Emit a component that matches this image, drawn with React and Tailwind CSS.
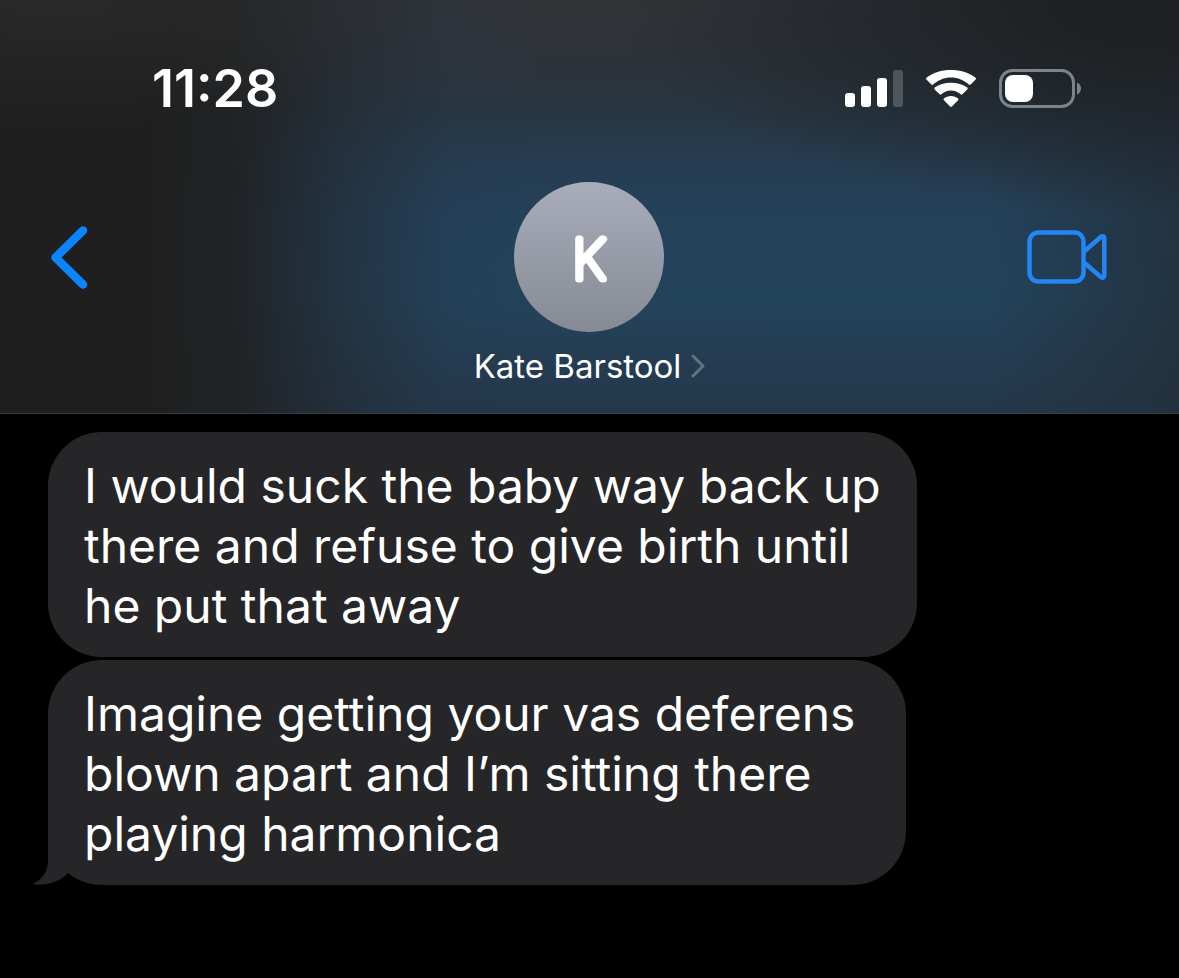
const messages = [
    {
        id: 1,
        lines: [
            "I would suck the baby way back up",
            "there and refuse to give birth until",
            "he put that away",
        ],
    },
    {
        id: 2,
        lines: [
            "Imagine getting your vas deferens",
            "blown apart and I’m sitting there",
            "playing harmonica",
        ],
    },
];

const SignalIcon = () => (
    <svg width="58" height="38" viewBox="0 0 58 38" fill="white" aria-hidden="true">
        <rect x="0" y="23" width="10" height="14" rx="3" />
        <rect x="16" y="16" width="10" height="21" rx="3" />
        <rect x="32" y="8" width="10" height="29" rx="3" />
        <rect x="48" y="0" width="10" height="37" rx="3" opacity="0.2" />
    </svg>
);

const WifiIcon = () => (
    <svg width="52" height="38" viewBox="0 0 52 38" fill="white" aria-hidden="true">
        <path d="M26 7.500c6.900 0 13.200 2.700 17.900 7.100.5.5 1.200.5 1.700 0l5-5c.5-.5.5-1.300 0-1.800C44.200 2.600 35.500 0 26 0S7.800 2.600 1.400 7.800c-.5.5-.5 1.300 0 1.800l5 5c.5.5 1.200.5 1.700 0C12.800 10.200 19.100 7.500 26 7.500z" />
        <path d="M26 20.600c3.700 0 7.100 1.400 9.700 3.700.5.5 1.200.5 1.700 0l4.900-4.900c.5-.5.5-1.300 0-1.800C38 14.600 32.300 12.700 26 12.700s-12 1.900-16.300 4.900c-.5.5-.5 1.300 0 1.800l4.900 4.900c.5.5 1.200.5 1.700 0 2.600-2.300 6-3.700 9.700-3.700z" />
        <path d="M33.100 28.600c.5.5.5 1.200 0 1.700l-6.200 6.300c-.5.5-1.300.5-1.800 0l-6.200-6.300c-.5-.5-.5-1.200 0-1.700 1.900-1.600 4.300-2.600 7.100-2.600s5.200 1 7.100 2.600z" />
    </svg>
);

const BatteryIcon = () => (
    <svg width="83" height="40" viewBox="0 0 83 40" aria-hidden="true">
        <rect x="1.500" y="1.500" width="73" height="36" rx="12" fill="none" stroke="#7b858d" strokeWidth="3" />
        <path d="M78 13.500c2.700 1.200 4 3.500 4 6s-1.300 4.800-4 6z" fill="#7b858d" />
        <rect x="6" y="6" width="28" height="27" rx="8" fill="white" />
    </svg>
);

const StatusBar = () => (
    <div className="flex items-center justify-between pl-[152px] pr-[97px] pt-14">
        <time className="pt-px text-[52px] font-semibold leading-[64px]">11:28</time>
        <div className="flex items-center gap-[22px]">
            <SignalIcon />
            <WifiIcon />
            <BatteryIcon />
        </div>
    </div>
);

const Header = () => (
    <header className="border-b border-[#33404b] bg-[radial-gradient(ellipse_48%_52%_at_100%_0%,rgba(30,33,35,1)_20%,rgba(30,35,40,0.6)_60%,transparent),radial-gradient(ellipse_35%_30%_at_5%_0%,rgba(48,48,48,0.6),transparent),linear-gradient(to_right,#1f1f1f_0%,#1f1f1f_13%,rgba(32,33,34,0.92)_20%,rgba(34,40,47,0.55)_29%,rgba(36,54,74,0.2)_38%,transparent_46%,transparent_84%,rgba(34,46,57,0.75)_100%),linear-gradient(to_bottom,#323437_0%,#2d333b_18%,#283641_27%,#263c50_38%,#24415a_52%,#23435b_72%,#243e54_84%,#24374a_100%)]">
        <StatusBar />
        <div className="grid grid-cols-[1fr_auto_1fr] pt-[61px] pb-[25px]">
            <button aria-label="Back" className="mt-[42px] ml-[50px] self-start justify-self-start cursor-pointer">
                <svg width="38" height="66" viewBox="0 0 38 66" fill="none" aria-hidden="true">
                    <path d="M33 6.500L5.500 33.500L33 60.500" stroke="#0a84ff" strokeWidth="8.500" strokeLinecap="round" strokeLinejoin="round" />
                </svg>
            </button>

            <button className="flex flex-col items-center cursor-pointer">
                <span className="size-[150px] rounded-full bg-linear-to-b from-[#a8adba] to-[#868a94]">
                    <svg width="150" height="150" viewBox="0 0 150 150">
                        <text
                            x="75"
                            y="97"
                            textAnchor="middle"
                            fill="white"
                            stroke="white"
                            strokeWidth="7"
                            strokeLinejoin="round"
                            className="text-[55px] font-thin"
                        >
                            K
                        </text>
                    </svg>
                </span>
                <span className="mt-3 flex items-center gap-2.5 text-[33px] leading-[44px]">
                    Kate Barstool
                    <svg width="14" height="24" viewBox="0 0 14 24" fill="none" aria-hidden="true">
                        <path d="M2 2l10 10L2 22" stroke="#62727f" strokeWidth="3" strokeLinecap="round" strokeLinejoin="round" />
                    </svg>
                </span>
            </button>

            <button aria-label="Video call" className="mt-12 mr-[72px] self-start justify-self-end cursor-pointer">
                <svg width="80" height="54" viewBox="0 0 80 54" fill="none" stroke="#2386f4" strokeWidth="4.500" strokeLinejoin="round" aria-hidden="true">
                    <rect x="2.500" y="2.500" width="54" height="49" rx="9" />
                    <path d="M57 21.500L73.500 7.200c1.800-1.500 3.800-.8 3.800 1.300v37c0 2.100-2 2.800-3.800 1.300L57 32.500" />
                </svg>
            </button>
        </div>
    </header>
);

const Bubble = ({ lines, tail }) => (
    <li className="relative w-fit min-w-[858px] rounded-[54px] bg-[#262628] px-9 pt-6 pb-[21px] text-[48px] leading-[60px]">
        {lines.map((line) => (
            <span key={line} className="block">{line} </span>
        ))}
        {tail && (
            <svg className="absolute bottom-0 -left-4" width="64" height="56" viewBox="0 0 64 56" aria-hidden="true">
                <path d="M16 0V30C16 42 11 51 0 55C12 57.500 26 54 35 45L50 30V0Z" fill="#262628" />
            </svg>
        )}
    </li>
);

const App = () => {
    return (
        <div className="min-h-screen bg-black font-['Inter',sans-serif] text-white">
            <Header />
            <main>
                <ul className="flex flex-col gap-[3px] px-12 pt-[18px]">
                    {messages.map((message, i) => (
                        <Bubble key={message.id} lines={message.lines} tail={i === messages.length - 1} />
                    ))}
                </ul>
            </main>
        </div>
    );
};

export default App;
